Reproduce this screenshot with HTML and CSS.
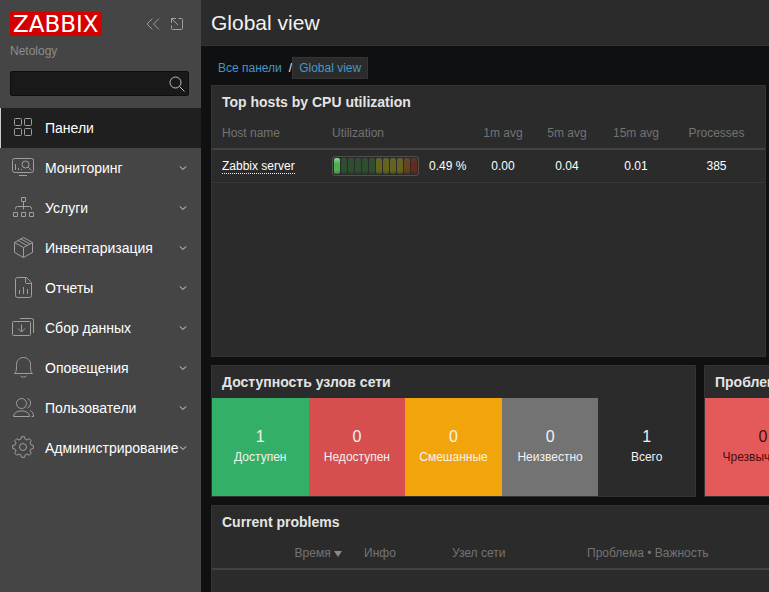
FILE: index.html
```html
<!DOCTYPE html>
<html lang="ru">
<head>
<meta charset="utf-8">
<meta name="viewport" content="width=device-width, initial-scale=1">
<title>Global view</title>
<link rel="stylesheet" href="styles.css">
</head>
<body>
<svg class="defs" aria-hidden="true">
  <symbol id="chevron" viewBox="0 0 8 8"><path d="M1 2.500 4 5.500 7 2.500"/></symbol>
</svg>
<aside class="sidebar">
  <div class="brand">
    <a class="logo" href="#">ZABBIX</a>
    <button class="icon-button" type="button" aria-label="Свернуть меню">
      <svg width="14" height="14" viewBox="0 0 14 14"><path d="M6.500 1.500 1 7l5.500 5.500M13 1.500 7.500 7l5.500 5.500"/></svg>
    </button>
    <button class="icon-button" type="button" aria-label="Скрыть меню">
      <svg width="14" height="14" viewBox="0 0 14 14"><path d="M8.500 1.500h3a1 1 0 0 1 1 1v9a1 1 0 0 1-1 1h-9a1 1 0 0 1-1-1v-3M1.500 6V1.500H6M1.500 1.500 8 8"/></svg>
    </button>
  </div>
  <div class="server">Netology</div>
  <form class="search">
    <input type="text" aria-label="Поиск">
    <button class="icon-button" type="submit" aria-label="Найти">
      <svg width="16" height="16" viewBox="0 0 16 16"><circle cx="6.500" cy="6.500" r="5.500"/><path d="m10.500 10.500 5 5"/></svg>
    </button>
  </form>
  <nav>
    <ul class="menu">
      <li><a class="active" href="#">
        <svg class="icon" viewBox="0 0 24 24"><rect x="3.500" y="2.500" width="7" height="7" rx="1"/><rect x="13.500" y="2.500" width="7" height="7" rx="1"/><rect x="3.500" y="12.500" width="7" height="7" rx="1"/><rect x="13.500" y="12.500" width="7" height="7" rx="1"/></svg>
        <span>Панели</span></a></li>
      <li><a href="#">
        <svg class="icon" viewBox="0 0 24 24"><rect x="1.500" y="2.500" width="21" height="14" rx="2"/><path d="M8 19.500h8M4.500 14V8M7.500 14v-2M10.500 14v-1M17 11l3.500 3.500"/><circle cx="14.500" cy="8.500" r="3.500"/></svg>
        <span>Мониторинг</span><svg class="chevron"><use href="#chevron"/></svg></a></li>
      <li><a href="#">
        <svg class="icon" viewBox="0 0 24 24"><path d="M10.500 1.500h4v4h-4zM2.500 16.500h4v4h-4zM10.500 16.500h4v4h-4zM18.500 16.500h4v4h-4zM12.500 5.500v8M4.500 13.500v-1a2 2 0 0 1 2-2h12a2 2 0 0 1 2 2v1"/></svg>
        <span>Услуги</span><svg class="chevron"><use href="#chevron"/></svg></a></li>
      <li><a href="#">
        <svg class="icon" viewBox="0 0 24 24"><path d="m12.500 1.500 9 5v10l-9 5-9-5v-10zM3.500 6.500l9 5 9-5M12.500 11.500v10M7 4.500l9 5M10 3l9 5"/></svg>
        <span>Инвентаризация</span><svg class="chevron"><use href="#chevron"/></svg></a></li>
      <li><a href="#">
        <svg class="icon" viewBox="0 0 24 24"><path d="M6.500 1.500h9l5 5v13a2 2 0 0 1-2 2h-12a2 2 0 0 1-2-2v-16a2 2 0 0 1 2-2zM14.500 1.500v5a1 1 0 0 0 1 1h5M8.500 18v-4M12.500 18v-7M16.500 18v-5"/></svg>
        <span>Отчеты</span><svg class="chevron"><use href="#chevron"/></svg></a></li>
      <li><a href="#">
        <svg class="icon" viewBox="0 0 24 24"><rect x="1.500" y="5.500" width="18" height="14" rx="1"/><path d="M9 2.500h11.500a2 2 0 0 1 2 2V17M10.500 8.500v7M7 12.500l3.500 3.500 3.500-3.500"/></svg>
        <span>Сбор данных</span><svg class="chevron"><use href="#chevron"/></svg></a></li>
      <li><a href="#">
        <svg class="icon" viewBox="0 0 24 24"><path d="M3.500 17.500c2-2 2-3.500 2-9 0-4 3-7 7-7s7 3 7 7c0 5.500 0 7 2 9zM9.500 20c1.500 1.500 4.500 1.500 6 0"/></svg>
        <span>Оповещения</span><svg class="chevron"><use href="#chevron"/></svg></a></li>
      <li><a href="#">
        <svg class="icon" viewBox="0 0 24 24"><circle cx="10.500" cy="7.500" r="5"/><path d="M2.500 20.500c0-7.500 16-7.500 16 0zM16.500 2.500c4 1 4 8 0 9.500M19 14.500c2.500 1 3.500 3 3.500 6h-2"/></svg>
        <span>Пользователи</span><svg class="chevron"><use href="#chevron"/></svg></a></li>
      <li><a href="#">
        <svg class="icon" viewBox="0 0 24 24"><g transform="translate(12 11)" stroke-linejoin="round"><circle r="3.500"/><path d="M-1.500-10.300H1.500L2.200-7.800Q3-7.200 4-7L6.200-8.300 8.300-6.200 7-4Q7.200-3 7.800-2.200L10.300-1.500V1.500L7.800 2.200Q7.200 3 7 4L8.300 6.200 6.200 8.300 4 7Q3 7.200 2.200 7.800L1.500 10.300H-1.500L-2.200 7.800Q-3 7.200-4 7L-6.200 8.300-8.300 6.200-7 4Q-7.200 3-7.800 2.200L-10.300 1.500V-1.500L-7.800-2.200Q-7.200-3-7-4L-8.300-6.200-6.200-8.300-4-7Q-3-7.200-2.200-7.800Z"/></g></svg>
        <span>Администрирование</span><svg class="chevron"><use href="#chevron"/></svg></a></li>
    </ul>
  </nav>
</aside>
<main class="content">
  <header class="page-header"><h1>Global view</h1></header>
  <nav class="breadcrumbs">
    <a href="#">Все панели</a><span class="slash">/</span><a class="current" href="#">Global view</a>
  </nav>
  <div class="dashboard">
    <section class="widget top-hosts">
      <h2>Top hosts by CPU utilization</h2>
      <table>
        <colgroup><col class="c-host"><col class="c-bar"><col class="c-value"><col class="c-1m"><col class="c-5m"><col class="c-15m"><col class="c-proc"></colgroup>
        <thead><tr><th>Host name</th><th colspan="2">Utilization</th><th class="center">1m avg</th><th class="center">5m avg</th><th class="center">15m avg</th><th class="center">Processes</th></tr></thead>
        <tbody><tr>
          <td><a class="host" href="#">Zabbix server</a></td>
          <td><div class="gauge"><i class="on"></i><i></i><i></i><i></i><i></i><i></i><i class="warn"></i><i class="warn"></i><i class="warn"></i><i class="warn"></i><i class="high"></i><i class="crit"></i></div></td>
          <td>0.49 %</td><td class="center">0.00</td><td class="center">0.04</td><td class="center">0.01</td><td class="center">385</td>
        </tr></tbody>
      </table>
    </section>
    <div class="row">
      <section class="widget hosts">
        <h2>Доступность узлов сети</h2>
        <div class="tiles">
          <div class="tile available"><b>1</b><span>Доступен</span></div>
          <div class="tile unavailable"><b>0</b><span>Недоступен</span></div>
          <div class="tile mixed"><b>0</b><span>Смешанные</span></div>
          <div class="tile unknown"><b>0</b><span>Неизвестно</span></div>
          <div class="tile"><b>1</b><span>Всего</span></div>
        </div>
      </section>
      <section class="widget severity">
        <h2>Проблемы по важности</h2>
        <div class="tiles"><div class="tile disaster"><b>0</b><span>Чрезвычайная</span></div></div>
      </section>
    </div>
    <section class="widget problems">
      <h2>Current problems</h2>
      <table>
        <colgroup><col class="c-time"><col class="c-line"><col class="c-info"><col class="c-node"><col></colgroup>
        <thead><tr><th class="right">Время <svg class="sort" viewBox="0 0 8 6"><path d="M0 0h8L4 6z"/></svg></th><th></th><th>Инфо</th><th>Узел сети</th><th>Проблема • Важность</th></tr></thead>
        <tbody><tr><td></td><td></td><td></td><td></td><td></td></tr></tbody>
      </table>
    </section>
  </div>
</main>
</body>
</html>
```
FILE: styles.css
```css
* { box-sizing: border-box; }

body {
  display: flex;
  height: 100vh;
  margin: 0;
  overflow: hidden;
  background: #0e1012;
  color: #f2f2f2;
  font: 12px/16px "Liberation Sans", Arial, sans-serif;
}

a { color: inherit; text-decoration: none; }
svg { fill: none; stroke: #9f9f9f; flex: none; }
.defs { position: absolute; width: 0; height: 0; }

.sidebar {
  flex: none;
  width: 201px;
  padding-top: 12px;
  background: #454545;
}

.brand {
  display: flex;
  align-items: center;
  gap: 10px;
  padding: 0 17px 0 10px;
}

.logo {
  margin-right: auto;
  padding: 0 3px;
  background: #d40000;
  color: #fff;
  font: 23px/24px "DejaVu Sans", sans-serif;
}

.icon-button {
  display: flex;
  padding: 0;
  border: 0;
  background: none;
}

.server {
  margin: 7px 10px 12px;
  color: #8c8c8c;
}

.search {
  display: flex;
  align-items: center;
  height: 25px;
  margin: 0 12px 12px 10px;
  padding-right: 3px;
  border: 1px solid #0a0f12;
  border-radius: 2px;
  background: #191919;
}

.search input {
  flex: 1;
  min-width: 0;
  border: 0;
  outline: 0;
  background: none;
  color: #f2f2f2;
  font: inherit;
}

.search svg { stroke: #c0c0c0; }

.menu { margin: 0; padding: 0; list-style: none; }

.menu a {
  display: flex;
  align-items: center;
  height: 40px;
  padding: 0 14px 0 11px;
  color: #fff;
  font-size: 14px;
}

.menu a.active {
  border-left: 1px solid #ccc;
  padding-left: 10px;
  background: #1f1f1f;
}

.menu span { flex: 1; width: 0; padding-left: 10px; white-space: nowrap; }
.icon { width: 24px; height: 24px; }
.chevron { width: 8px; height: 8px; stroke: #e0e0e0; }

.content { flex: 1; min-width: 0; overflow: hidden; }

.page-header {
  height: 46px;
  padding: 0 10px;
  border-bottom: 1px solid #333;
  background: #2b2b2b;
}

h1 { margin: 0; font-size: 21px; line-height: 46px; font-weight: 400; }

.breadcrumbs {
  display: flex;
  align-items: center;
  height: 22px;
  margin: 11px 17px 6px;
  color: #4796c4;
}

.slash { margin-left: 7px; color: #f2f2f2; }

.breadcrumbs .current {
  padding: 2px 6px;
  border: 1px solid #353535;
  background: #2b2b2b;
}

.dashboard {
  display: flex;
  flex-direction: column;
  gap: 8px;
  padding-left: 10px;
}

.widget { border: 1px solid #333; background: #2b2b2b; overflow: hidden; }

h2 {
  margin: 0;
  padding: 0 10px;
  color: #e4e4e4;
  font-size: 14px;
  line-height: 32px;
  white-space: nowrap;
}

.top-hosts { min-height: 272px; margin-right: 3px; }
.row { display: flex; gap: 8px; }
.hosts { flex: 1; }
.severity { flex: none; width: 65px; border-right: 0; }
.problems { border-right: 0; }

table { width: 100%; table-layout: fixed; border-collapse: separate; border-spacing: 0; }
th, td { height: 33px; padding: 0 5px; border-bottom: 1px solid #383838; text-align: left; white-space: nowrap; }
td { color: #fff; }
th { height: 32px; border-bottom: 2px solid #424242; color: #737373; font-weight: 400; }
th:first-child, td:first-child { padding-left: 10px; }
.top-hosts th:last-child, .top-hosts td:last-child { padding-right: 10px; }
table .center { text-align: center; }
table .right { text-align: right; }

.c-host { width: 115px; }
.c-bar { width: 97px; }
.c-value { width: 47px; }
.c-1m, .c-5m { width: 64px; }
.c-15m { width: 74px; }
.c-time { width: 135px; }
.c-line { width: 12px; }
.c-info { width: 88px; }
.c-node { width: 135px; }

.host { border-bottom: 1px dotted #f2f2f2; }

.gauge {
  display: flex;
  gap: 1px;
  width: 87px;
  height: 20px;
  padding: 1px;
  border: 1px solid #505050;
  border-radius: 3px;
}

.gauge i { flex: 1; border-radius: 2px; background: linear-gradient(#3b4b3b, #2f4d31 30%, #2f4d31 80%, #293b2a); }
.gauge .on { background: linear-gradient(#92d594, #4caf50 35%, #4caf50 80%, #367d39); }
.gauge .warn { background: linear-gradient(#61613a, #62631f 30%, #62631f 80%, #47481e); }
.gauge .high { background: linear-gradient(#604a38, #67421f 30%, #67421f 80%, #4b3320); }
.gauge .crit { background: linear-gradient(#5a3a36, #632b20 30%, #632b20 80%, #482520); }

.sort { width: 8px; height: 6px; fill: #888; stroke: none; }

.tiles { display: flex; }

.tile {
  display: flex;
  flex: 1;
  flex-direction: column;
  align-items: center;
  justify-content: center;
  height: 98px;
  padding-bottom: 4px;
}

.tile b { font-size: 16px; line-height: 24px; font-weight: 400; }
.available { background: #34af67; }
.unavailable { background: #d64e4e; }
.mixed { background: #f2a50b; }
.unknown { background: #737373; }
.severity .tile { flex: none; width: 116px; }
.disaster { background: #e45959; color: #4b0c0c; }
```
